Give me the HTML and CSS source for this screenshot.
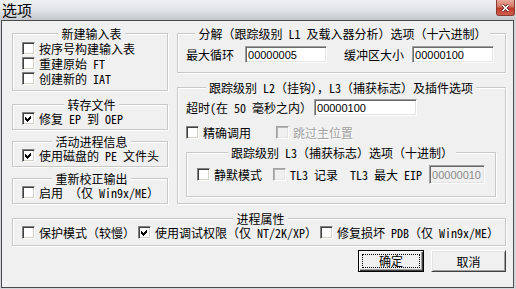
FILE: index.html
```html
<!DOCTYPE html>
<html lang="zh-CN">
<head>
    <meta charset="UTF-8">
    <title>选项</title>
    <link rel="stylesheet" href="styles.css">
</head>
<body>

<div class="window">
    <div class="titlebar">
        <span class="title">选项</span>
        <span class="close">
            <svg width="9" height="8" viewBox="0 0 9 8"><path d="M1.5 1 L7.5 7 M7.5 1 L1.5 7" stroke="#5a1a14" stroke-width="3"/><path d="M1.5 1 L7.5 7 M7.5 1 L1.5 7" stroke="#fff" stroke-width="1.6"/></svg>
        </span>
    </div>

    <div class="client">
        <div class="top">
            <div class="col-left">
                <fieldset class="grp g-first">
                    <legend>新建输入表</legend>
                    <label class="chk"><span class="cb"></span>按序号构建输入表</label>
                    <label class="chk"><span class="cb"></span>重建原始 FT</label>
                    <label class="chk"><span class="cb"></span>创建新的 IAT</label>
                </fieldset>
                <fieldset class="grp">
                    <legend>转存文件</legend>
                    <label class="chk"><span class="cb on"><svg width="7" height="7" viewBox="0 0 7 7"><polygon points="0,2 2,4 6,0 6,3 2,7 0,5"/></svg></span>修复 EP 到 OEP</label>
                </fieldset>
                <fieldset class="grp">
                    <legend>活动进程信息</legend>
                    <label class="chk"><span class="cb on"><svg width="7" height="7" viewBox="0 0 7 7"><polygon points="0,2 2,4 6,0 6,3 2,7 0,5"/></svg></span>使用磁盘的 PE 文件头</label>
                </fieldset>
                <fieldset class="grp">
                    <legend>重新校正输出</legend>
                    <label class="chk"><span class="cb"></span>启用 （仅 Win9x/ME）</label>
                </fieldset>
            </div>

            <div class="col-right">
                <fieldset class="grp r1">
                    <legend>分解（跟踪级别 L1 及载入器分析）选项（十六进制）</legend>
                    <div class="row">
                        <span class="lbl">最大循环</span>
                        <input class="edit loop" type="text" value="00000005" readonly>
                        <span class="lbl buf">缓冲区大小</span>
                        <input class="edit bufsize" type="text" value="00000100" readonly>
                    </div>
                </fieldset>

                <fieldset class="grp r2">
                    <legend>跟踪级别 L2（挂钩），L3（捕获标志）及插件选项</legend>
                    <div class="row timeout">
                        <span class="lbl">超时(在 50 毫秒之内）</span>
                        <input class="edit wide" type="text" value="00000100" readonly>
                    </div>
                    <div class="row opts">
                        <label class="chk"><span class="cb"></span>精确调用</label>
                        <label class="chk disabled"><span class="cb dis"></span>跳过主位置</label>
                    </div>
                    <fieldset class="grp inner">
                        <legend>跟踪级别 L3（捕获标志）选项（十进制）</legend>
                        <div class="row l3">
                            <label class="chk"><span class="cb"></span>静默模式</label>
                            <label class="chk tl3log"><span class="cb dis"></span>TL3 记录</label>
                            <span class="lbl eip">TL3 最大 EIP</span>
                            <input class="edit small" type="text" value="00000010" disabled>
                        </div>
                    </fieldset>
                </fieldset>
            </div>
        </div>

        <fieldset class="grp proc">
            <legend>进程属性</legend>
            <div class="row procrow">
                <label class="chk"><span class="cb"></span>保护模式（较慢）</label>
                <label class="chk"><span class="cb on"><svg width="7" height="7" viewBox="0 0 7 7"><polygon points="0,2 2,4 6,0 6,3 2,7 0,5"/></svg></span>使用调试权限（仅 NT/2K/XP）</label>
                <label class="chk"><span class="cb"></span>修复损坏 PDB（仅 Win9x/ME）</label>
            </div>
        </fieldset>

        <div class="buttons">
            <button class="btn btn-ok"><span class="focus">确定</span></button>
            <button class="btn btn-cancel">取消</button>
        </div>
    </div>
</div>

</body>
</html>
```

FILE: styles.css
```css
body {
    margin: 0;
    font-family: "Noto Sans Mono CJK SC", "Noto Sans CJK SC", sans-serif;
    font-size: 12px;
    color: #000;
}

.window {
    width: 516px;
    height: 289px;
    background: #d3d7db;
    display: flex;
    flex-direction: column;
}

/* title bar */
.titlebar {
    height: 20px;
    display: flex;
    background: linear-gradient(to bottom, #eef0f2 0%, #e2e5e8 50%, #c4c8cc 100%);
}

.title {
    padding-left: 2px;
    font-size: 15px;
    line-height: 19px;
}

.close {
    margin-left: auto;
    margin-right: 1px;
    width: 19px;
    height: 16px;
    box-sizing: border-box;
    border: 1px solid #8d3a30;
    border-top: none;
    border-radius: 0 0 3px 3px;
    background: linear-gradient(to bottom, #e8a99c 0%, #d47462 45%, #c0392b 55%, #d0604c 100%);
    display: flex;
    align-items: center;
    justify-content: center;
}

.close svg {
    display: block;
}

/* dialog body */
.client {
    flex: 1;
    margin: 0 2px 1px 1px;
    border: 1px solid #4a4a4a;
    background: #f0f0f0;
    padding: 6px 7px 0 10px;
}

.top {
    display: flex;
    gap: 9px;
}

.col-left {
    width: 156px;
    display: flex;
    flex-direction: column;
    gap: 5px;
}

.col-right {
    width: 329px;
}

/* group boxes */
.grp {
    margin: 0;
    min-width: 0;
    border: 1px solid #c8c8c8;
    box-shadow: 1px 1px 0 #fff, inset 1px 1px 0 #fff;
    padding: 0 6px 3px 9px;
}

.grp legend {
    margin: 0 auto;
    padding: 0 3px;
    line-height: 13px;
    background: #f0f0f0;
}

.g-first {
    padding-top: 1px;
    padding-bottom: 4px;
    margin-bottom: 2px;
}

.row {
    display: flex;
    align-items: center;
}

.lbl {
    white-space: nowrap;
}

/* checkboxes */
.chk {
    display: flex;
    align-items: center;
    gap: 4px;
    height: 15px;
    line-height: 15px;
    white-space: nowrap;
}

.cb {
    flex: none;
    width: 13px;
    height: 13px;
    box-sizing: border-box;
    background: #fff;
    border: 1px solid;
    border-color: #808080 #fff #fff #808080;
    box-shadow: inset 1px 1px 0 #404040, inset -1px -1px 0 #d4d0c8;
    display: flex;
    align-items: center;
    justify-content: center;
}

.cb svg {
    display: block;
    fill: #000;
    shape-rendering: crispEdges;
}

.cb.dis {
    background: #f0f0f0;
    border-color: #a0a0a0 #fff #fff #a0a0a0;
    box-shadow: inset 1px 1px 0 #b4b4b4, inset -1px -1px 0 #e3e3e3;
}

.disabled {
    color: #a0a0a0;
    text-shadow: 1px 1px 0 #fff;
}

/* edit boxes */
.edit {
    box-sizing: border-box;
    height: 17px;
    margin: 0;
    padding: 0 2px;
    font-family: "Liberation Sans", sans-serif;
    font-size: 11px;
    color: #000;
    background: #fff;
    border: 1px solid;
    border-color: #a0a0a0 #fff #fff #a0a0a0;
    box-shadow: inset 1px 1px 0 #696969, inset -1px -1px 0 #e3e3e3;
    outline: none;
}

.edit:disabled {
    background: #f0f0f0;
    color: #8a8a8a;
}

/* first group on the right */
.r1 {
    padding: 6px 6px 9px 8px;
}

.loop {
    width: 82px;
    margin-left: 11px;
}

.buf {
    margin-left: 17px;
}

.bufsize {
    width: 82px;
    margin-left: 8px;
}

/* second group on the right */
.r2 {
    margin-top: 8px;
    padding: 5px 9px 6px 8px;
}

.wide {
    width: 103px;
    margin-left: 2px;
}

.opts {
    margin-top: 9px;
    gap: 25px;
}

.inner {
    margin-top: 6px;
    padding: 6px 8px 12px 10px;
}

.tl3log {
    margin-left: 11px;
}

.eip {
    margin-left: 12px;
}

.small {
    width: 56px;
    height: 19px;
    margin-left: 7px;
}

/* process group */
.proc {
    margin-top: 8px;
    padding-bottom: 5px;
}

.procrow {
    gap: 3px;
}

/* buttons */
.buttons {
    display: flex;
    justify-content: flex-end;
    gap: 7px;
    margin-top: 4px;
}

.btn {
    height: 22px;
    margin: 0;
    padding: 0;
    font-family: inherit;
    font-size: 12px;
    color: #000;
    background: #f0f0f0;
    border: 1px solid;
    border-color: #fff #404040 #404040 #fff;
    box-shadow: inset 1px 1px 0 #e3e3e3, inset -1px -1px 0 #a0a0a0;
}

.btn-ok {
    width: 66px;
    display: flex;
    border-color: #000;
    box-shadow: inset 1px 1px 0 #fff, inset -1px -1px 0 #404040, inset -2px -2px 0 #a0a0a0;
}

.btn-ok .focus {
    flex: 1;
    margin: 3px;
    border: 1px dotted #000;
    line-height: 12px;
    display: flex;
    align-items: center;
    justify-content: center;
}

.btn-cancel {
    width: 75px;
}
```
